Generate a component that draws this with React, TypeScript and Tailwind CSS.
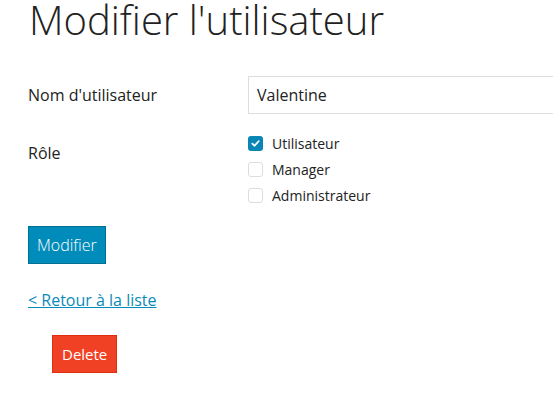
import React, { useState } from "react";

const roles = ["Utilisateur", "Manager", "Administrateur"];

const App = () => {
  const [name, setName] = useState("Valentine");
  const [checked, setChecked] = useState<string[]>(["Utilisateur"]);

  const toggle = (r: string) => {
    setChecked(checked.includes(r) ? checked.filter((c) => c !== r) : [...checked, r]);
  };

  return (
    <div className="w-[553px] h-[408px] overflow-hidden bg-white text-[#222] font-['Open_Sans',sans-serif]">
      <div className="pl-7 pt-[6px]">
        <h1 className="text-[40px] leading-[28px] font-light pl-[1px] whitespace-nowrap">Modifier l'utilisateur</h1>

        <form className="mt-[42px]" onSubmit={(e) => e.preventDefault()}>
          {/* nom */}
          <div className="flex items-center">
            <label className="w-[220px] shrink-0 text-[16px]">Nom d'utilisateur</label>
            <input
              type="text"
              value={name}
              onChange={(e) => setName(e.target.value)}
              className="w-[340px] shrink-0 h-[38px] border border-[#ddd] px-2 text-[16px] text-[#222] focus:outline-none"
            />
          </div>

          {/* role */}
          <div className="flex mt-[22px]">
            <div className="w-[220px] shrink-0 text-[16px] pt-[5px]">Rôle</div>
            <div className="flex flex-col gap-[11px]">
              {roles.map((r) => {
                const on = checked.includes(r);
                return (
                  <label key={r} className="flex items-center gap-[9px] text-[14px] leading-[15px] cursor-pointer" onClick={() => toggle(r)}>
                    {on ? (
                      <span className="w-[15px] h-[15px] rounded-[3px] bg-[#0a86b5] flex items-center justify-center">
                        <svg width="9" height="9" viewBox="0 0 10 10" fill="none">
                          <path d="M1.5 5.2 L4 7.5 L8.5 2.5" stroke="white" strokeWidth="2" strokeLinecap="round" strokeLinejoin="round" />
                        </svg>
                      </span>
                    ) : (
                      <span className="w-[15px] h-[15px] rounded-[3px] border border-[#ddd] bg-white" />
                    )}
                    <span>{r}</span>
                  </label>
                );
              })}
            </div>
          </div>

          <button className="mt-[23px] h-[38px] px-2 bg-[#008cba] border border-[#007095] text-white text-[16px] font-light">
            Modifier
          </button>
        </form>

        <div className="mt-[24px]">
          <a href="#" className="text-[16px] text-[#0a8ab8] underline">
            &lt; Retour à la liste
          </a>
        </div>

        <div className="pl-6 mt-[23px]">
          <button className="h-[38px] px-[9px] bg-[#f04124] border border-[#de2d0f] text-white text-[15px]">
            Delete
          </button>
        </div>
      </div>
    </div>
  );
};

export default App;
